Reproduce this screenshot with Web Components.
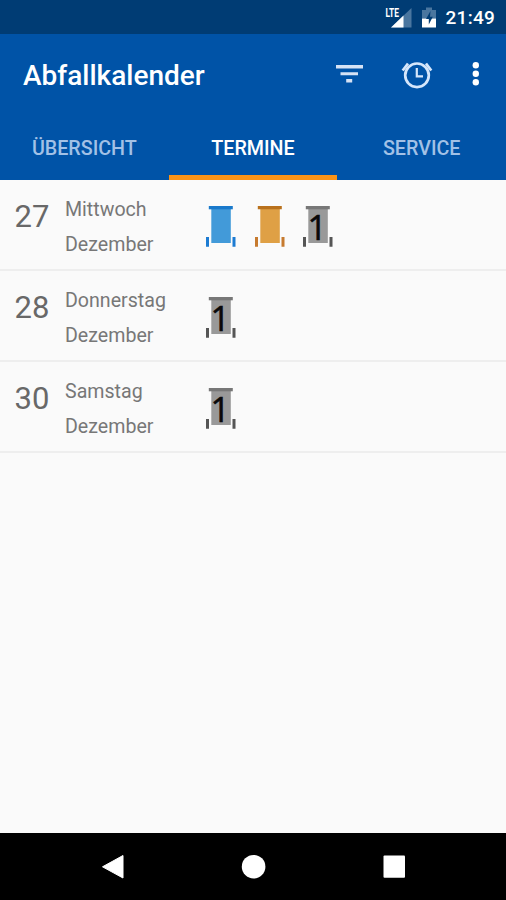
<!DOCTYPE html>
<html lang="de">
<head>
<meta charset="utf-8">
<title>Abfallkalender</title>
<style>
html,body{margin:0;height:100%}
body{font-family:Roboto,"Liberation Sans",sans-serif;background:#fafafa;overflow:hidden}
</style>
</head>
<body>
<waste-app></waste-app>
<script>
const define = (name, html, setup) => customElements.define(name, class extends HTMLElement {
  connectedCallback() {
    if (this.shadowRoot) return;
    const t = document.createElement('template');
    t.innerHTML = html;
    this.attachShadow({mode: 'open'}).append(t.content.cloneNode(true));
    if (setup) setup(this, this.shadowRoot);
  }
});

define('status-bar', `
<style>
:host{display:flex;height:34px;background:#003c74;color:#fff;align-items:center;justify-content:flex-end;padding-right:11px;box-sizing:border-box}
svg{display:block}
span{font-size:19px;font-weight:500;line-height:34px;padding-top:2px;margin-left:9px;letter-spacing:.25px}
</style>
<svg width="54" height="34" viewBox="383 0 54 34">
<path d="M411.5 8v19.5H391z" fill="#4a769f"/>
<path d="M384 5h15v12h-15z" fill="#003c74"/>
<path d="M403.5 15.5v12H391z" fill="#fff"/>
<text x="385.500" y="16.500" font-family="Roboto" font-weight="700" font-size="12.500" textLength="13.500" lengthAdjust="spacingAndGlyphs" fill="#fff">LTE</text>
<path d="M422 10h4V7.500h6V10h4v8.500h-14z" fill="#4a769f"/>
<path d="M422 18.500h14v9h-14z" fill="#fff"/>
<path d="M430.500 11l-4.500 8h2.800v5.500l4-7.800h-2.800z" fill="#003c74"/>
</svg>
<span>21:49</span>`);

define('app-bar', `
<style>
:host{display:flex;height:80px;align-items:center;padding-left:23px;color:#fff}
h1{font-size:28px;font-weight:500;margin:0;line-height:30px;flex:1;padding-top:4px}
svg{display:block}
</style>
<h1><slot></slot></h1>
<svg width="186" height="80" viewBox="320 34 186 80" fill="none">
<g fill="#d5e2f5"><path d="M336 65h27v3.400h-27zM340.500 72.300h17.500v3h-17.500zM346.200 79h6v3.400h-6z"/></g>
<g stroke="#d5e6fb"><circle cx="417" cy="75.300" r="11.800" stroke-width="2.700"/><path d="M416.800 68v8.300h6.200" stroke-width="2.200"/><path d="M408 63.500l-5.300 7M426 63.500l5.300 7" stroke-width="2.700"/></g>
<g fill="#fff"><circle cx="475.800" cy="65.200" r="3.200"/><circle cx="475.800" cy="73.700" r="3.200"/><circle cx="475.800" cy="82.200" r="3.200"/></g>
</svg>`);

define('tab-item', `
<style>
:host{display:flex;flex:1;align-items:center;justify-content:center;box-sizing:border-box;color:#a2c1e6;font-size:19.700px;font-weight:500;border-bottom:5px solid transparent;padding-top:8px}
:host([active]){color:#fff;border-color:#fb9316}
</style><span><slot></slot></span>`);

define('tab-bar', `<style>:host{display:flex;height:66px}</style><slot></slot>`);

define('bin-icon', `
<style>:host{display:block;width:32px;height:43px}svg{display:block;overflow:visible}</style>
<svg width="32" height="43" viewBox="0 0 32 43">
<path class="b" d="M6.300 4h19.500v34H6.300z"/>
<path class="l" d="M3.800 1h24v3.300h-24z"/>
<path class="f" d="M1 32h3v9.800H1zM27.500 32h3v9.800h-3z"/>
<text x="5.500" y="34.500" font-family="Open Sans" font-size="34" fill="#090909" stroke="#090909" stroke-width=".6"></text>
</svg>`, (host, root) => {
  const c = {
    blue: ['#429ad9', '#1979cb', '#1c7bd2'],
    orange: ['#dfa045', '#b9711c', '#c67a2f'],
    grey: ['#999', '#777', '#555']
  }[host.getAttribute('color')];
  ['.b', '.l', '.f'].forEach((s, i) => root.querySelector(s).setAttribute('fill', c[i]));
  const label = host.getAttribute('label');
  if (label) root.querySelector('text').textContent = label;
  else root.querySelector('text').remove();
});

define('date-row', `
<style>
:host{display:grid;grid-template-columns:65px 140px 1fr;height:91px;box-sizing:border-box;border-bottom:2px solid #eee;color:#686868}
.n{font-size:31px;line-height:36px;padding:19px 0 0 14.500px}
.d{font-size:19.600px;line-height:35px;padding-top:12px;color:#777}
.i{display:flex;gap:16.500px;padding-top:25px}
</style>
<div class="n"><slot name="day"></slot></div>
<div class="d"><div><slot name="weekday"></slot></div><div><slot name="month"></slot></div></div>
<div class="i"><slot></slot></div>`);

define('nav-bar', `
<style>:host{display:block;height:67px;background:#000}svg{display:block}</style>
<svg width="506" height="67" viewBox="0 833 506 67" fill="#fff">
<path d="M123 855.500v22.500l-20.500-11.200z" stroke="#fff" stroke-linejoin="round"/>
<circle cx="253.600" cy="866.700" r="11.800"/>
<rect x="383.500" y="855.500" width="21.500" height="22.300" rx="1"/>
</svg>`);

define('waste-app', `
<style>
:host{display:flex;flex-direction:column;width:506px;height:900px;background:#fafafa}
header{background:#0053a7;height:146px}
main{flex:1}
</style>
<status-bar></status-bar>
<header>
<app-bar>Abfallkalender</app-bar>
<tab-bar><tab-item>ÜBERSICHT</tab-item><tab-item active>TERMINE</tab-item><tab-item>SERVICE</tab-item></tab-bar>
</header>
<main>
<date-row><span slot="day">27</span><span slot="weekday">Mittwoch</span><span slot="month">Dezember</span><bin-icon color="blue"></bin-icon><bin-icon color="orange"></bin-icon><bin-icon color="grey" label="1"></bin-icon></date-row>
<date-row><span slot="day">28</span><span slot="weekday">Donnerstag</span><span slot="month">Dezember</span><bin-icon color="grey" label="1"></bin-icon></date-row>
<date-row><span slot="day">30</span><span slot="weekday">Samstag</span><span slot="month">Dezember</span><bin-icon color="grey" label="1"></bin-icon></date-row>
</main>
<nav-bar></nav-bar>`);
</script>
</body>
</html>
